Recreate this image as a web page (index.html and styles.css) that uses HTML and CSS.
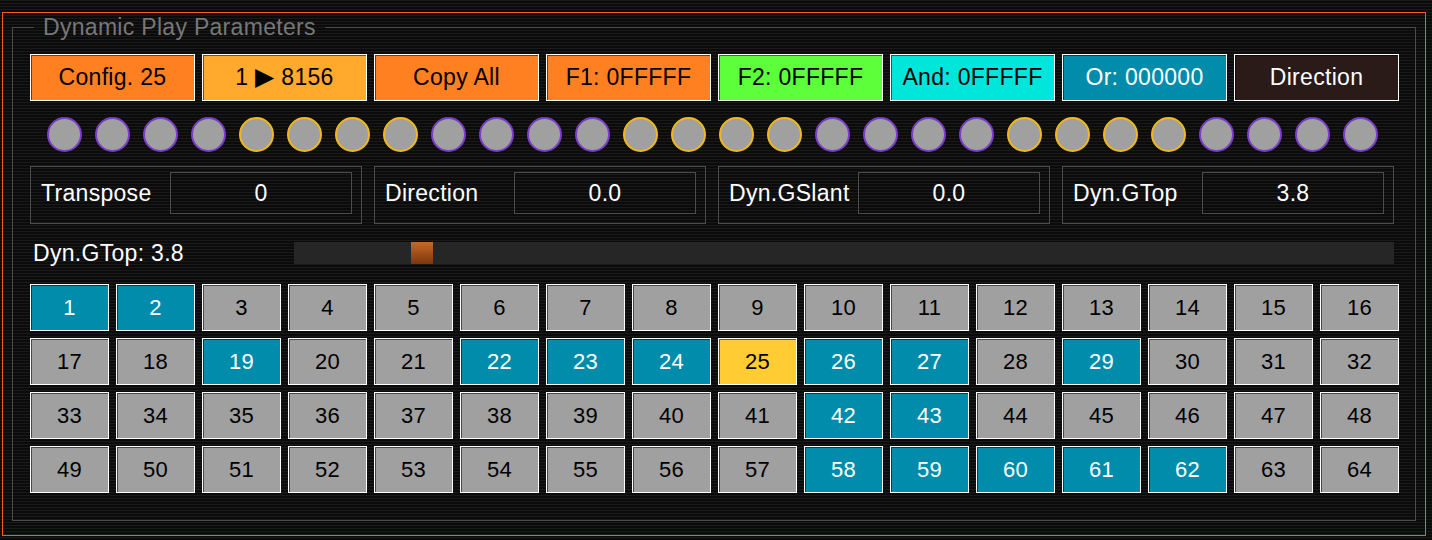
FILE: index.html
```html
<!DOCTYPE html>
<html lang="en">
<head>
<meta charset="utf-8">
<title>Dynamic Play Parameters</title>
<link rel="stylesheet" href="styles.css">
</head>
<body>
<div class="frame">
  <fieldset class="panel">
    <legend class="panel-title">Dynamic Play Parameters</legend>

    <div class="btn-row">
      <div class="btn btn-orange">Config. 25</div>
      <div class="btn btn-amber"><span class="btn-text">1 <span class="play">▶</span> 8156</span></div>
      <div class="btn btn-orange">Copy All</div>
      <div class="btn btn-orange">F1: 0FFFFF</div>
      <div class="btn btn-green">F2: 0FFFFF</div>
      <div class="btn btn-cyan">And: 0FFFFF</div>
      <div class="btn btn-teal">Or: 000000</div>
      <div class="btn btn-dark">Direction</div>
    </div>

    <div class="led-row">
      <span class="led led-p"></span><span class="led led-p"></span><span class="led led-p"></span><span class="led led-p"></span>
      <span class="led led-y"></span><span class="led led-y"></span><span class="led led-y"></span><span class="led led-y"></span>
      <span class="led led-p"></span><span class="led led-p"></span><span class="led led-p"></span><span class="led led-p"></span>
      <span class="led led-y"></span><span class="led led-y"></span><span class="led led-y"></span><span class="led led-y"></span>
      <span class="led led-p"></span><span class="led led-p"></span><span class="led led-p"></span><span class="led led-p"></span>
      <span class="led led-y"></span><span class="led led-y"></span><span class="led led-y"></span><span class="led led-y"></span>
      <span class="led led-p"></span><span class="led led-p"></span><span class="led led-p"></span><span class="led led-p"></span>
    </div>

    <div class="param-row">
      <div class="param"><span class="param-label">Transpose</span><span class="param-value">0</span></div>
      <div class="param"><span class="param-label">Direction</span><span class="param-value">0.0</span></div>
      <div class="param"><span class="param-label">Dyn.GSlant</span><span class="param-value">0.0</span></div>
      <div class="param"><span class="param-label">Dyn.GTop</span><span class="param-value">3.8</span></div>
    </div>

    <div class="slider-row">
      <span class="slider-label">Dyn.GTop: 3.8</span>
      <div class="slider-track"><span class="slider-thumb"></span></div>
    </div>

    <div class="grid">
      <div class="cell on">1</div><div class="cell on">2</div><div class="cell">3</div><div class="cell">4</div>
      <div class="cell">5</div><div class="cell">6</div><div class="cell">7</div><div class="cell">8</div>
      <div class="cell">9</div><div class="cell">10</div><div class="cell">11</div><div class="cell">12</div>
      <div class="cell">13</div><div class="cell">14</div><div class="cell">15</div><div class="cell">16</div>

      <div class="cell">17</div><div class="cell">18</div><div class="cell on">19</div><div class="cell">20</div>
      <div class="cell">21</div><div class="cell on">22</div><div class="cell on">23</div><div class="cell on">24</div>
      <div class="cell cur">25</div><div class="cell on">26</div><div class="cell on">27</div><div class="cell">28</div>
      <div class="cell on">29</div><div class="cell">30</div><div class="cell">31</div><div class="cell">32</div>

      <div class="cell">33</div><div class="cell">34</div><div class="cell">35</div><div class="cell">36</div>
      <div class="cell">37</div><div class="cell">38</div><div class="cell">39</div><div class="cell">40</div>
      <div class="cell">41</div><div class="cell on">42</div><div class="cell on">43</div><div class="cell">44</div>
      <div class="cell">45</div><div class="cell">46</div><div class="cell">47</div><div class="cell">48</div>

      <div class="cell">49</div><div class="cell">50</div><div class="cell">51</div><div class="cell">52</div>
      <div class="cell">53</div><div class="cell">54</div><div class="cell">55</div><div class="cell">56</div>
      <div class="cell">57</div><div class="cell on">58</div><div class="cell on">59</div><div class="cell on">60</div>
      <div class="cell on">61</div><div class="cell on">62</div><div class="cell">63</div><div class="cell">64</div>
    </div>
  </fieldset>
</div>
</body>
</html>
```
FILE: styles.css
```css
* { box-sizing: border-box; }

html, body {
  margin: 0;
  height: 540px;
  overflow: hidden;
}

body {
  background: repeating-linear-gradient(to bottom, #1a1a1a 0, #1a1a1a 1px, #0b0b0b 1px, #0b0b0b 3px);
  font-family: "Liberation Sans", Arial, "DejaVu Sans", sans-serif;
  letter-spacing: 0.3px;
  color: #fff;
}

.frame {
  margin: 12px 6px 0 2px;
  height: 524px;
  border: 1px solid #ff5a1e;
  padding: 1px 9px 14px 9px;
  display: flex;
  flex-direction: column;
}

.panel {
  flex: 1;
  margin: 0;
  min-width: 0;
  border: 1px solid #4c4c4c;
  padding: 14px 16px 0 17px;
}

.panel-title {
  margin-left: 4px;
  padding: 0 9px;
  font-size: 23px;
  line-height: 26px;
  color: #777;
}

.btn-row {
  display: flex;
  gap: 7px;
}

.btn {
  width: 165px;
  height: 47px;
  border: 1px solid #fff;
  box-shadow: inset 1px 1px 0 rgba(0, 0, 0, 0.55);
  display: flex;
  align-items: center;
  justify-content: center;
  font-size: 23px;
  color: #000;
  white-space: nowrap;
}

.btn-text {
  white-space: pre;
}

.play {
  font-family: "DejaVu Sans", sans-serif;
  font-size: 25px;
  line-height: 1;
}

.btn-orange { background: #ff8020; }
.btn-amber  { background: #ffaa2c; }
.btn-green  { background: #5cff3a; }
.btn-cyan   { background: #00e6da; }
.btn-teal   { background: #008caa; color: #fff; }
.btn-dark   { background: #2a1a18; color: #fff; }

.led-row {
  display: flex;
  gap: 13px;
  margin-top: 16px;
  padding-left: 17px;
}

.led {
  width: 35px;
  height: 35px;
  border-radius: 50%;
  background: #a0a0a0;
  border: 2px solid #7a3cc8;
}

.led-y { border-color: #f0b820; }

.param-row {
  display: flex;
  gap: 12px;
  margin-top: 14px;
}

.param {
  width: 332px;
  height: 58px;
  border: 1px solid #4c4c4c;
  display: flex;
  align-items: flex-start;
  padding: 5px 9px 0 10px;
}

.param-label {
  width: 129px;
  height: 42px;
  line-height: 42px;
  font-size: 23px;
  color: #fff;
  white-space: nowrap;
}

.param-value {
  flex: 1;
  height: 42px;
  line-height: 40px;
  border: 1px solid #4c4c4c;
  text-align: center;
  font-size: 23px;
  color: #fff;
}

.slider-row {
  display: flex;
  align-items: center;
  margin-top: 18px;
  height: 22px;
}

.slider-label {
  width: 264px;
  padding-left: 3px;
  font-size: 23px;
  color: #fff;
  white-space: nowrap;
}

.slider-track {
  width: 1100px;
  height: 22px;
  background: #262626;
  padding-left: 117px;
}

.slider-thumb {
  display: block;
  width: 22px;
  height: 22px;
  background: linear-gradient(to bottom, #c46a2a, #9a4a16 60%, #7a3810);
}

.grid {
  margin-top: 20px;
  display: grid;
  grid-template-columns: repeat(16, 79px);
  grid-auto-rows: 47px;
  gap: 7px;
}

.cell {
  border: 1px solid #fff;
  box-shadow: inset 1px 1px 0 rgba(0, 0, 0, 0.55);
  background: #a0a0a0;
  color: #000;
  font-size: 22px;
  display: flex;
  align-items: center;
  justify-content: center;
}

.cell.on  { background: #008caa; color: #fff; }
.cell.cur { background: #ffcc33; color: #000; }
```
